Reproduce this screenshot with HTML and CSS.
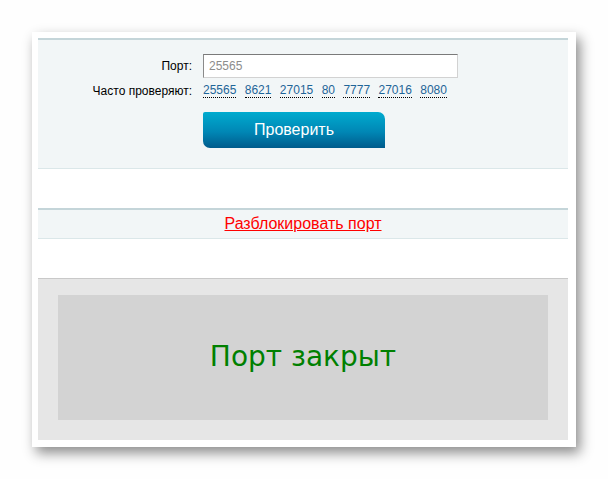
FILE: index.html
```html
<!DOCTYPE html>
<html lang="ru">
<head>
    <meta charset="UTF-8">
    <title>Проверка порта</title>
    <link rel="stylesheet" href="styles.css">
</head>
<body>

    <div class="card">
        <!-- Port check form -->
        <div class="check-form">
            <div class="form-label">Порт:</div>
            <div><input type="text" class="port-input" placeholder="25565"></div>

            <div class="form-label">Часто проверяют:</div>
            <div class="popular">
                <a href="#">25565</a>
                <a href="#">8621</a>
                <a href="#">27015</a>
                <a href="#">80</a>
                <a href="#">7777</a>
                <a href="#">27016</a>
                <a href="#">8080</a>
            </div>

            <div></div>
            <div><button class="check-btn">Проверить</button></div>
        </div>

        <div class="spacer"></div>

        <div class="unblock-row">
            <a href="#" class="unblock-link">Разблокировать порт</a>
        </div>

        <div class="spacer"></div>

        <!-- Result -->
        <div class="result">
            <div class="result-box">Порт закрыт</div>
        </div>
    </div>

</body>
</html>
```

FILE: styles.css
```css
body {
    margin: 0;
    padding: 32px;
    background: #fefefe;
    font-family: "Liberation Sans", Arial, sans-serif;
    font-size: 12px;
    color: #000;
}
.card {
    width: 530px;
    background: #fff;
    padding: 6px 8px 7px 6px;
    box-shadow: 4px 6px 12px rgba(0, 0, 0, 0.45);
}

/* form */
.check-form {
    display: grid;
    grid-template-columns: 154px 1fr;
    column-gap: 11px;
    row-gap: 4px;
    align-items: center;
    background: #f2f6f7;
    border-top: 2px solid #c4d5d9;
    border-bottom: 1px solid #dbe7e9;
    padding: 14px 0 20px;
}
.form-label {
    text-align: right;
}
.port-input {
    display: block;
    width: 255px;
    height: 24px;
    box-sizing: border-box;
    padding: 0 5px;
    border: 1px solid #d2d2d2;
    border-top-color: #7a7a7a;
    border-left-color: #8a8a8a;
    font-family: "Liberation Sans", Arial, sans-serif;
    font-size: 12px;
    background: #fff;
}
.port-input::placeholder {
    color: #8c8c8c;
}
.popular {
    display: flex;
    gap: 8.4px;
    height: 18px;
    align-items: center;
}
.popular a {
    color: #1f6598;
    text-decoration: none;
    border-bottom: 1px dotted #000;
    line-height: 13px;
}
.check-btn {
    display: block;
    margin-top: 8px;
    width: 182px;
    height: 36px;
    border: none;
    border-radius: 2px 7px 0 7px;
    background: linear-gradient(#00abcf, #0087b5 55%, #005b8c);
    color: #fff;
    font-family: "Liberation Sans", Arial, sans-serif;
    font-size: 16px;
    cursor: pointer;
}

.spacer {
    height: 39px;
}

.unblock-row {
    background: #f2f6f7;
    border-top: 2px solid #c4d5d9;
    border-bottom: 1px solid #dbe7e9;
    height: 28px;
    line-height: 28px;
    text-align: center;
}
.unblock-link {
    color: #ff0000;
    font-size: 16px;
}

/* result */
.result {
    background: #e6e6e6;
    border-top: 1px solid #c9c9c9;
    padding: 16px 20px 20px;
}
.result-box {
    background: #d3d3d3;
    height: 125px;
    line-height: 123px;
    text-align: center;
    color: #008000;
    font-family: "DejaVu Sans", Verdana, sans-serif;
    font-size: 28px;
}
```
